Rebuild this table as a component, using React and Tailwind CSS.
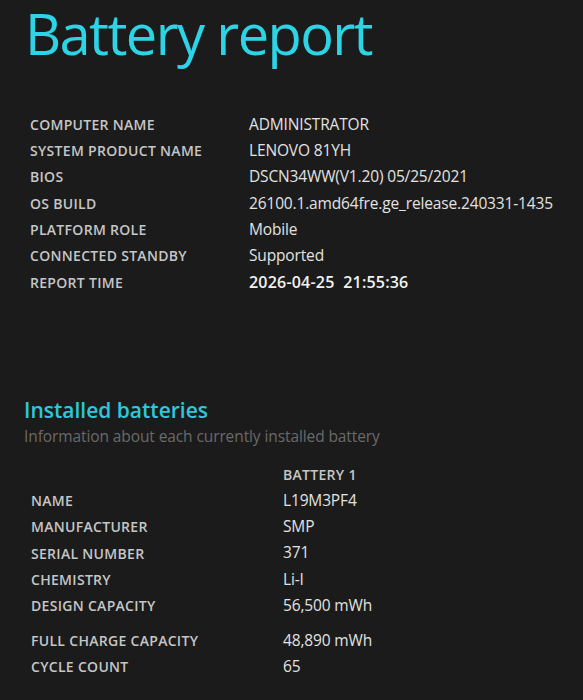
export default function App() {
  const sys = [
    ["COMPUTER NAME", "ADMINISTRATOR"],
    ["SYSTEM PRODUCT NAME", "LENOVO 81YH"],
    ["BIOS", "DSCN34WW(V1.20) 05/25/2021"],
    ["OS BUILD", "26100.1.amd64fre.ge_release.240331-1435"],
    ["PLATFORM ROLE", "Mobile"],
    ["CONNECTED STANDBY", "Supported"],
  ];
  const bat = [
    ["NAME", "L19M3PF4"],
    ["MANUFACTURER", "SMP"],
    ["SERIAL NUMBER", "371"],
    ["CHEMISTRY", "Li-I"],
    ["DESIGN CAPACITY", "56,500 mWh"],
  ];
  const label = "text-[14px] font-semibold text-[#c6c6c6] tracking-[0.3px]";
  const val = "text-[15.5px] text-[#e2e2e2] tracking-[-0.15px]";
  return (
    <div
      className="w-[583px] h-[700px] overflow-hidden bg-[#1b1b1b]"
      style={{ fontFamily: '"Open Sans", "Noto Sans", sans-serif' }}
    >
      <h1 className="pl-[25px] h-[80px] text-[56px] leading-[66px] text-[#2cd4e6] tracking-[-1.6px] whitespace-nowrap">
        Battery report
      </h1>
      <div className="mt-[31px] pl-[30px]">
        {sys.map(([k, v]) => (
          <div key={k} className="flex h-[26.33px] items-center">
            <div className={"w-[219px] " + label}>{k}</div>
            <div className={val}>{v}</div>
          </div>
        ))}
        <div className="flex h-[26.33px] items-center">
          <div className={"w-[219px] " + label}>REPORT TIME</div>
          <div className="text-[16px] font-semibold text-[#f2f2f2] tracking-[0.2px] whitespace-pre">2026-04-25  21:55:36</div>
        </div>
      </div>
      <div className="mt-[102px] pl-[24px]">
        <div className="h-[26px] flex items-center text-[21px] font-semibold text-[#2cc9dc] tracking-[0px]">Installed batteries</div>
        <div className="h-[26px] flex items-center text-[15.5px] text-[#6a6a6a] tracking-[-0.1px]">Information about each currently installed battery</div>
      </div>
      <div className="mt-[12px] pl-[31px]">
        <div className="flex h-[26px] items-center">
          <div className="w-[252px]" />
          <div className={label}>BATTERY 1</div>
        </div>
        {bat.map(([k, v]) => (
          <div key={k} className="flex h-[26.33px] items-center">
            <div className={"w-[252px] " + label}>{k}</div>
            <div className={val}>{v}</div>
          </div>
        ))}
        <div className="flex h-[26px] items-center mt-[9px]">
          <div className={"w-[252px] " + label}>FULL CHARGE CAPACITY</div>
          <div className={val}>48,890 mWh</div>
        </div>
        <div className="flex h-[26px] items-center">
          <div className={"w-[252px] " + label}>CYCLE COUNT</div>
          <div className={val}>65</div>
        </div>
      </div>
    </div>
  );
}
